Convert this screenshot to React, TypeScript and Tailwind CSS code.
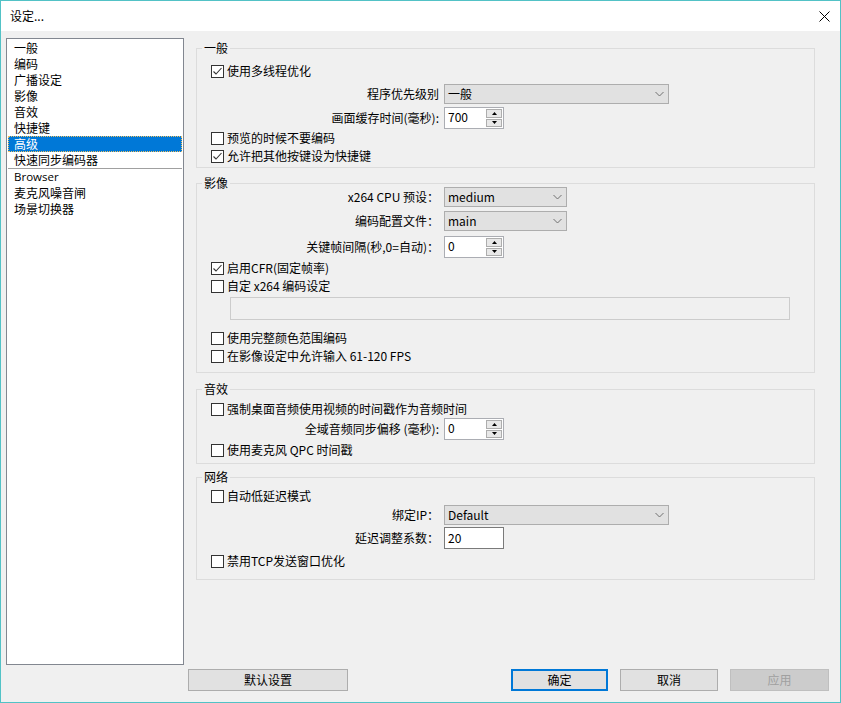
import React from "react";

const listItems = ["一般", "编码", "广播设定", "影像", "音效", "快捷键", "高级", "快速同步编码器"];
const pluginItems = ["Browser", "麦克风噪音闸", "场景切换器"];

function Check({ checked, label, className = "" }: { checked?: boolean; label: string; className?: string }) {
    return (
        <div className={"flex items-center h-[18px] pl-[14px] " + className}>
            <span className="w-[13px] h-[13px] border border-[#333333] bg-white flex items-center justify-center shrink-0">
                {checked && (
                    <svg width="11" height="11" viewBox="0 0 11 11">
                        <polyline points="1.5,5.5 4,8 9.5,2" fill="none" stroke="#333333" strokeWidth="1.1" />
                    </svg>
                )}
            </span>
            <span className="ml-[3px] leading-[16px]">{label}</span>
        </div>
    );
}

function Label({ children }: { children: React.ReactNode }) {
    return <div className="w-[247px] pr-[5px] text-right leading-[16px] shrink-0">{children}</div>;
}

function Dropdown({ value, width }: { value: string; width: string }) {
    return (
        <div className={"h-[20px] bg-[#e1e1e1] border border-[#adadad] flex items-center justify-between pl-[3px] pr-[4px] " + width}>
            <span className="leading-[16px]">{value}</span>
            <svg width="9" height="6" viewBox="0 0 9 6">
                <polyline points="0.5,1 4.5,5 8.5,1" fill="none" stroke="#707070" strokeWidth="1" />
            </svg>
        </div>
    );
}

function Spin({ value }: { value: string }) {
    return (
        <div className="w-[60px] h-[22px] bg-white border border-[#abadb3] flex">
            <div className="flex-1 pl-[3px] leading-[16px] pt-[1px]">{value}</div>
            <div className="w-[17px] flex flex-col py-[1px] pr-[1px] gap-[1px]">
                <div className="flex-1 bg-[#e8e8e8] border border-[#adadad] flex items-center justify-center">
                    <svg width="5" height="3" viewBox="0 0 5 3"><polygon points="2.5,0 5,3 0,3" fill="#000" /></svg>
                </div>
                <div className="flex-1 bg-[#e8e8e8] border border-[#adadad] flex items-center justify-center">
                    <svg width="5" height="3" viewBox="0 0 5 3"><polygon points="0,0 5,0 2.5,3" fill="#000" /></svg>
                </div>
            </div>
        </div>
    );
}

function Group({ title, className = "", children }: { title: string; className?: string; children: React.ReactNode }) {
    return (
        <fieldset className={"w-[619px] border border-[#dcdcdc] " + className}>
            <legend className="ml-[5px] px-[2px] leading-[12px] h-[12px]">{title}</legend>
            {children}
        </fieldset>
    );
}

export default function App() {
    return (
        <div className="w-[841px] h-[703px] border border-[#52c2c6] bg-[#f0f0f0] flex flex-col text-[12px] text-black font-['Noto_Sans_CJK_SC',sans-serif] overflow-hidden">
            <div className="h-[30px] bg-white flex items-center justify-between pl-[9px] pr-[10px] shrink-0">
                <span className="leading-[16px]">设定...</span>
                <svg width="11" height="11" viewBox="0 0 11 11">
                    <path d="M0.5 0.5 L10.5 10.5 M10.5 0.5 L0.5 10.5" stroke="#000" strokeWidth="1" />
                </svg>
            </div>

            <div className="flex mt-[7px]">
                <div className="ml-[5px] w-[178px] h-[627px] border border-[#828790] bg-white px-px pt-px shrink-0">
                    {listItems.map((item) =>
                        item === "高级" ? (
                            <div key={item} className="h-[16px] leading-[14px] pl-[5px] bg-[#0078d7] text-white border border-dotted border-[#f0c060]">
                                {item}
                            </div>
                        ) : (
                            <div key={item} className="h-[16px] leading-[16px] pl-[6px]">
                                {item}
                            </div>
                        )
                    )}
                    <div className="h-px bg-[#a0a0a0]" />
                    {pluginItems.map((item) => (
                        <div key={item} className={"h-[16px] leading-[16px] pl-[6px] " + (item === "Browser" ? "font-['Open_Sans',sans-serif] text-[11.5px]" : "")}>
                            {item}
                        </div>
                    ))}
                </div>

                <div className="ml-[12px] pt-[4px] flex flex-col">
                    <Group title="一般" className="pb-[2px]">
                        <Check checked label="使用多线程优化" className="mt-[8px]" />
                        <div className="flex items-center h-[20px] mt-[4px]">
                            <Label>程序优先级别</Label>
                            <Dropdown value="一般" width="w-[225px]" />
                        </div>
                        <div className="flex items-center h-[22px] mt-[3px]">
                            <Label>画面缓存时间(毫秒):</Label>
                            <Spin value="700" />
                        </div>
                        <Check label="预览的时候不要编码" />
                        <Check checked label="允许把其他按键设为快捷键" />
                    </Group>

                    <Group title="影像" className="mt-[9px] pb-[7px]">
                        <div className="flex items-center h-[20px] mt-[-2px]">
                            <Label>x264 CPU 预设：</Label>
                            <Dropdown value="medium" width="w-[123px]" />
                        </div>
                        <div className="flex items-center h-[20px] mt-[4px]">
                            <Label>编码配置文件：</Label>
                            <Dropdown value="main" width="w-[123px]" />
                        </div>
                        <div className="flex items-center h-[22px] mt-[5px]">
                            <Label>关键帧间隔(秒,0=自动)：</Label>
                            <Spin value="0" />
                        </div>
                        <Check checked label="启用CFR(固定帧率)" className="mt-[1px]" />
                        <Check label="自定 x264 编码设定" />
                        <div className="ml-[33px] mt-[2px] w-[560px] h-[23px] border border-[#cccccc] bg-[#f0f0f0]" />
                        <Check label="使用完整颜色范围编码" className="mt-[9px]" />
                        <Check label="在影像设定中允许输入 61-120 FPS" />
                    </Group>

                    <Group title="音效" className="mt-[10px] pb-[4px]">
                        <Check label="强制桌面音频使用视频的时间戳作为音频时间" className="mt-[5px]" />
                        <div className="flex items-center h-[22px]">
                            <Label>全域音频同步偏移 (毫秒):</Label>
                            <Spin value="0" />
                        </div>
                        <Check label="使用麦克风 QPC 时间戳" className="mt-[1px]" />
                    </Group>

                    <Group title="网络" className="mt-[7px] pb-[9px]">
                        <Check label="自动低延迟模式" className="mt-[4px]" />
                        <div className="flex items-center h-[20px]">
                            <Label>绑定IP：</Label>
                            <Dropdown value="Default" width="w-[225px]" />
                        </div>
                        <div className="flex items-center h-[22px] mt-[2px]">
                            <Label>延迟调整系数：</Label>
                            <div className="w-[60px] h-[22px] bg-white border border-[#7a7a7a] pl-[3px] pt-[2px] leading-[16px]">20</div>
                        </div>
                        <Check label="禁用TCP发送窗口优化" className="mt-[3px]" />
                    </Group>
                </div>
            </div>

            <div className="flex mt-[4px] h-[22px]">
                <button className="ml-[187px] w-[160px] h-[22px] bg-[#e1e1e1] border border-[#adadad] leading-[16px]">默认设置</button>
                <button className="ml-[163px] w-[97px] h-[22px] bg-[#e1e1e1] border-2 border-[#0078d7] leading-[16px]">确定</button>
                <button className="ml-[12px] w-[98px] h-[22px] bg-[#e1e1e1] border border-[#adadad] leading-[16px]">取消</button>
                <button className="ml-[12px] w-[99px] h-[22px] bg-[#cccccc] border border-[#bfbfbf] text-[#a0a0a0] leading-[16px]">应用</button>
            </div>
        </div>
    );
}
